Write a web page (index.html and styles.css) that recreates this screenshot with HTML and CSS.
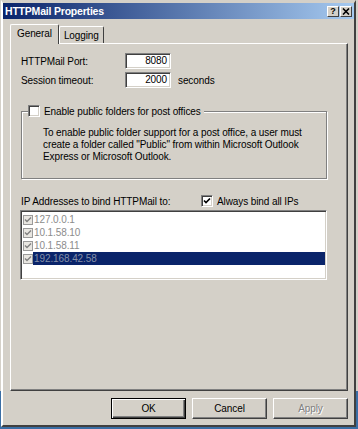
FILE: index.html
```html
<!DOCTYPE html>
<html lang="en">
<head>
  <meta charset="UTF-8" />
  <title>HTTPMail Properties</title>
  <link rel="stylesheet" href="styles.css">
</head>
<body>
  <div class="window">
    <div class="titlebar">
      <span class="title">HTTPMail Properties</span>
      <div class="caption-btns">
        <span class="cbtn">?</span>
        <span class="cbtn">
          <svg width="8" height="7" viewBox="0 0 8 7"><path d="M1 0.5 L7 6.5 M7 0.5 L1 6.5" stroke="#000" stroke-width="1.6"/></svg>
        </span>
      </div>
    </div>

    <div class="tabs">
      <span class="tab active">General</span>
      <span class="tab">Logging</span>
    </div>

    <div class="panel">
      <div class="field">
        <label>HTTPMail Port:</label>
        <span class="input">8080</span>
      </div>
      <div class="field">
        <label>Session timeout:</label>
        <span class="input">2000</span>
        <span class="unit">seconds</span>
      </div>

      <fieldset class="group">
        <legend><span class="check"></span>Enable public folders for post offices</legend>
        <p>To enable public folder support for a post office, a user must<br>
        create a folder called "Public" from within Microsoft Outlook<br>
        Express or Microsoft Outlook.</p>
      </fieldset>

      <div class="ip-head">
        <span class="ip-label">IP Addresses to bind HTTPMail to:</span>
        <span class="check on">
          <svg width="8" height="8" viewBox="0 0 8 8"><path d="M1 3.5 L3 5.5 L7 1.5" stroke="#000" stroke-width="1.7" fill="none"/></svg>
        </span>
        <span>Always bind all IPs</span>
      </div>

      <div class="iplist">
        <div class="ip"><span class="mini"><svg width="8" height="8" viewBox="0 0 8 8"><path d="M1 3.5 L3 5.5 L7 1.5" stroke="#808080" stroke-width="1.4" fill="none"/></svg></span><span class="ip-text">127.0.0.1</span></div>
        <div class="ip"><span class="mini"><svg width="8" height="8" viewBox="0 0 8 8"><path d="M1 3.5 L3 5.5 L7 1.5" stroke="#808080" stroke-width="1.4" fill="none"/></svg></span><span class="ip-text">10.1.58.10</span></div>
        <div class="ip"><span class="mini"><svg width="8" height="8" viewBox="0 0 8 8"><path d="M1 3.5 L3 5.5 L7 1.5" stroke="#808080" stroke-width="1.4" fill="none"/></svg></span><span class="ip-text">10.1.58.11</span></div>
        <div class="ip selected"><span class="mini"><svg width="8" height="8" viewBox="0 0 8 8"><path d="M1 3.5 L3 5.5 L7 1.5" stroke="#808080" stroke-width="1.4" fill="none"/></svg></span><span class="ip-text">192.168.42.58</span></div>
      </div>
    </div>

    <div class="buttons">
      <button class="btn default">OK</button>
      <button class="btn">Cancel</button>
      <button class="btn disabled">Apply</button>
    </div>
  </div>
</body>
</html>
```

FILE: styles.css
```css
body {
  margin: 0;
  height: 429px;
  overflow: hidden;
  background: linear-gradient(#d4d0c8 391px, #3a6ea5 391px);
  font-family: 'Liberation Sans', Arial, sans-serif;
  font-size: 10px;
  letter-spacing: -0.1px;
  color: #000;
}
.window {
  margin-left: 1px;
  width: 355px;
  height: 427px;
  box-sizing: border-box;
  background-color: #d4d0c8;
  border: 2px solid;
  border-top: 3px solid #d4d0c8;
  border-color: #d4d0c8 #404040 #404040 #fff;
}
.titlebar {
  height: 16px;
  display: flex;
  align-items: center;
  padding: 0 2px;
  background: linear-gradient(to right, #0a246a, #a6caf0);
}
.title {
  color: #fff;
  font-weight: bold;
  font-size: 10.5px;
  letter-spacing: -0.2px;
}
.caption-btns {
  margin-left: auto;
  display: flex;
  gap: 1px;
}
.cbtn {
  width: 12px;
  height: 11px;
  box-sizing: border-box;
  display: flex;
  align-items: center;
  justify-content: center;
  background-color: #d4d0c8;
  border: 1px solid;
  border-color: #fff #404040 #404040 #fff;
  font-weight: bold;
  font-size: 9px;
}
.tabs {
  position: relative;
  z-index: 1;
  display: flex;
  align-items: flex-end;
  height: 19px;
  margin: 5px 0 0 7px;
}
.tab {
  height: 17px;
  box-sizing: border-box;
  display: flex;
  align-items: center;
  padding: 0 4px;
  background-color: #d4d0c8;
  border: 1px solid;
  border-bottom: 0;
  border-color: #fff #404040 #404040 #fff;
  border-radius: 2px 2px 0 0;
}
.tab.active {
  height: 20px;
  margin-bottom: -1px;
  padding: 0 6px 2px;
}
.panel {
  margin-left: 7px;
  width: 338px;
  height: 348px;
  box-sizing: border-box;
  padding: 9px 0 0 10px;
  border: 1px solid;
  border-color: #fff #404040 #404040 #fff;
  box-shadow: inset -1px -1px #808080;
}
.field {
  display: flex;
  align-items: center;
  height: 16px;
}
.field + .field {
  margin-top: 3px;
}
.field label {
  width: 104px;
}
.input {
  width: 46px;
  height: 16px;
  box-sizing: border-box;
  padding-right: 3px;
  line-height: 14px;
  text-align: right;
  background-color: #fff;
  border: 1px solid;
  border-color: #808080 #fff #fff #808080;
  box-shadow: inset 1px 1px #404040, inset -1px -1px #d4d0c8;
}
.unit {
  margin-left: 7px;
}
.group {
  width: 306px;
  box-sizing: border-box;
  margin: 17px 0 0 0;
  padding: 0 10px 15px 6px;
  border: 1px solid #808080;
  box-shadow: 1px 1px #fff, inset 1px 1px #fff;
}
.group legend {
  display: flex;
  align-items: center;
  gap: 4px;
  padding: 0 3px 0 0;
  background-color: #d4d0c8;
}
.group p {
  margin: 10px 0 0 15px;
  line-height: 12px;
  white-space: nowrap;
}
.check {
  width: 12px;
  height: 12px;
  box-sizing: border-box;
  display: inline-flex;
  align-items: center;
  justify-content: center;
  background-color: #fff;
  border: 1px solid;
  border-color: #808080 #fff #fff #808080;
  box-shadow: inset 1px 1px #404040, inset -1px -1px #d4d0c8;
}
.ip-head {
  display: flex;
  align-items: center;
  height: 12px;
  margin-top: 16px;
}
.ip-label {
  width: 180px;
}
.ip-head .check {
  margin-right: 4px;
}
.iplist {
  width: 307px;
  height: 70px;
  box-sizing: border-box;
  margin: 3px 0 0 -1px;
  background-color: #fff;
  border: 1px solid;
  border-color: #808080 #fff #fff #808080;
  box-shadow: inset 1px 1px #404040, inset -1px -1px #d4d0c8;
  padding: 1px;
}
.ip {
  display: flex;
  align-items: center;
  height: 13px;
}
.ip:first-child {
  margin-top: 1px;
}
.mini {
  width: 10px;
  height: 10px;
  box-sizing: border-box;
  display: flex;
  align-items: center;
  justify-content: center;
  margin-left: 1px;
  background-color: #e8e6e1;
  border: 1px solid #9a9a9a;
}
.ip-text {
  flex: 1;
  height: 13px;
  line-height: 13px;
  padding-left: 1px;
  color: #8c8c8c;
}
.ip.selected .ip-text {
  background-color: #0a246a;
  color: #8590a8;
}
.buttons {
  display: flex;
  justify-content: flex-end;
  gap: 6px;
  margin-top: 7px;
  padding-right: 6px;
}
.btn {
  width: 75px;
  height: 21px;
  padding: 0;
  font-family: inherit;
  font-size: 10px;
  letter-spacing: -0.1px;
  color: #000;
  background-color: #d4d0c8;
  border: 1px solid;
  border-color: #fff #404040 #404040 #fff;
  box-shadow: inset -1px -1px #808080;
}
.btn.default {
  border-color: #000;
  box-shadow: inset 1px 1px #fff, inset -1px -1px #404040, inset -2px -2px #808080;
}
.btn.disabled {
  color: #808080;
  text-shadow: 1px 1px #fff;
}
```
